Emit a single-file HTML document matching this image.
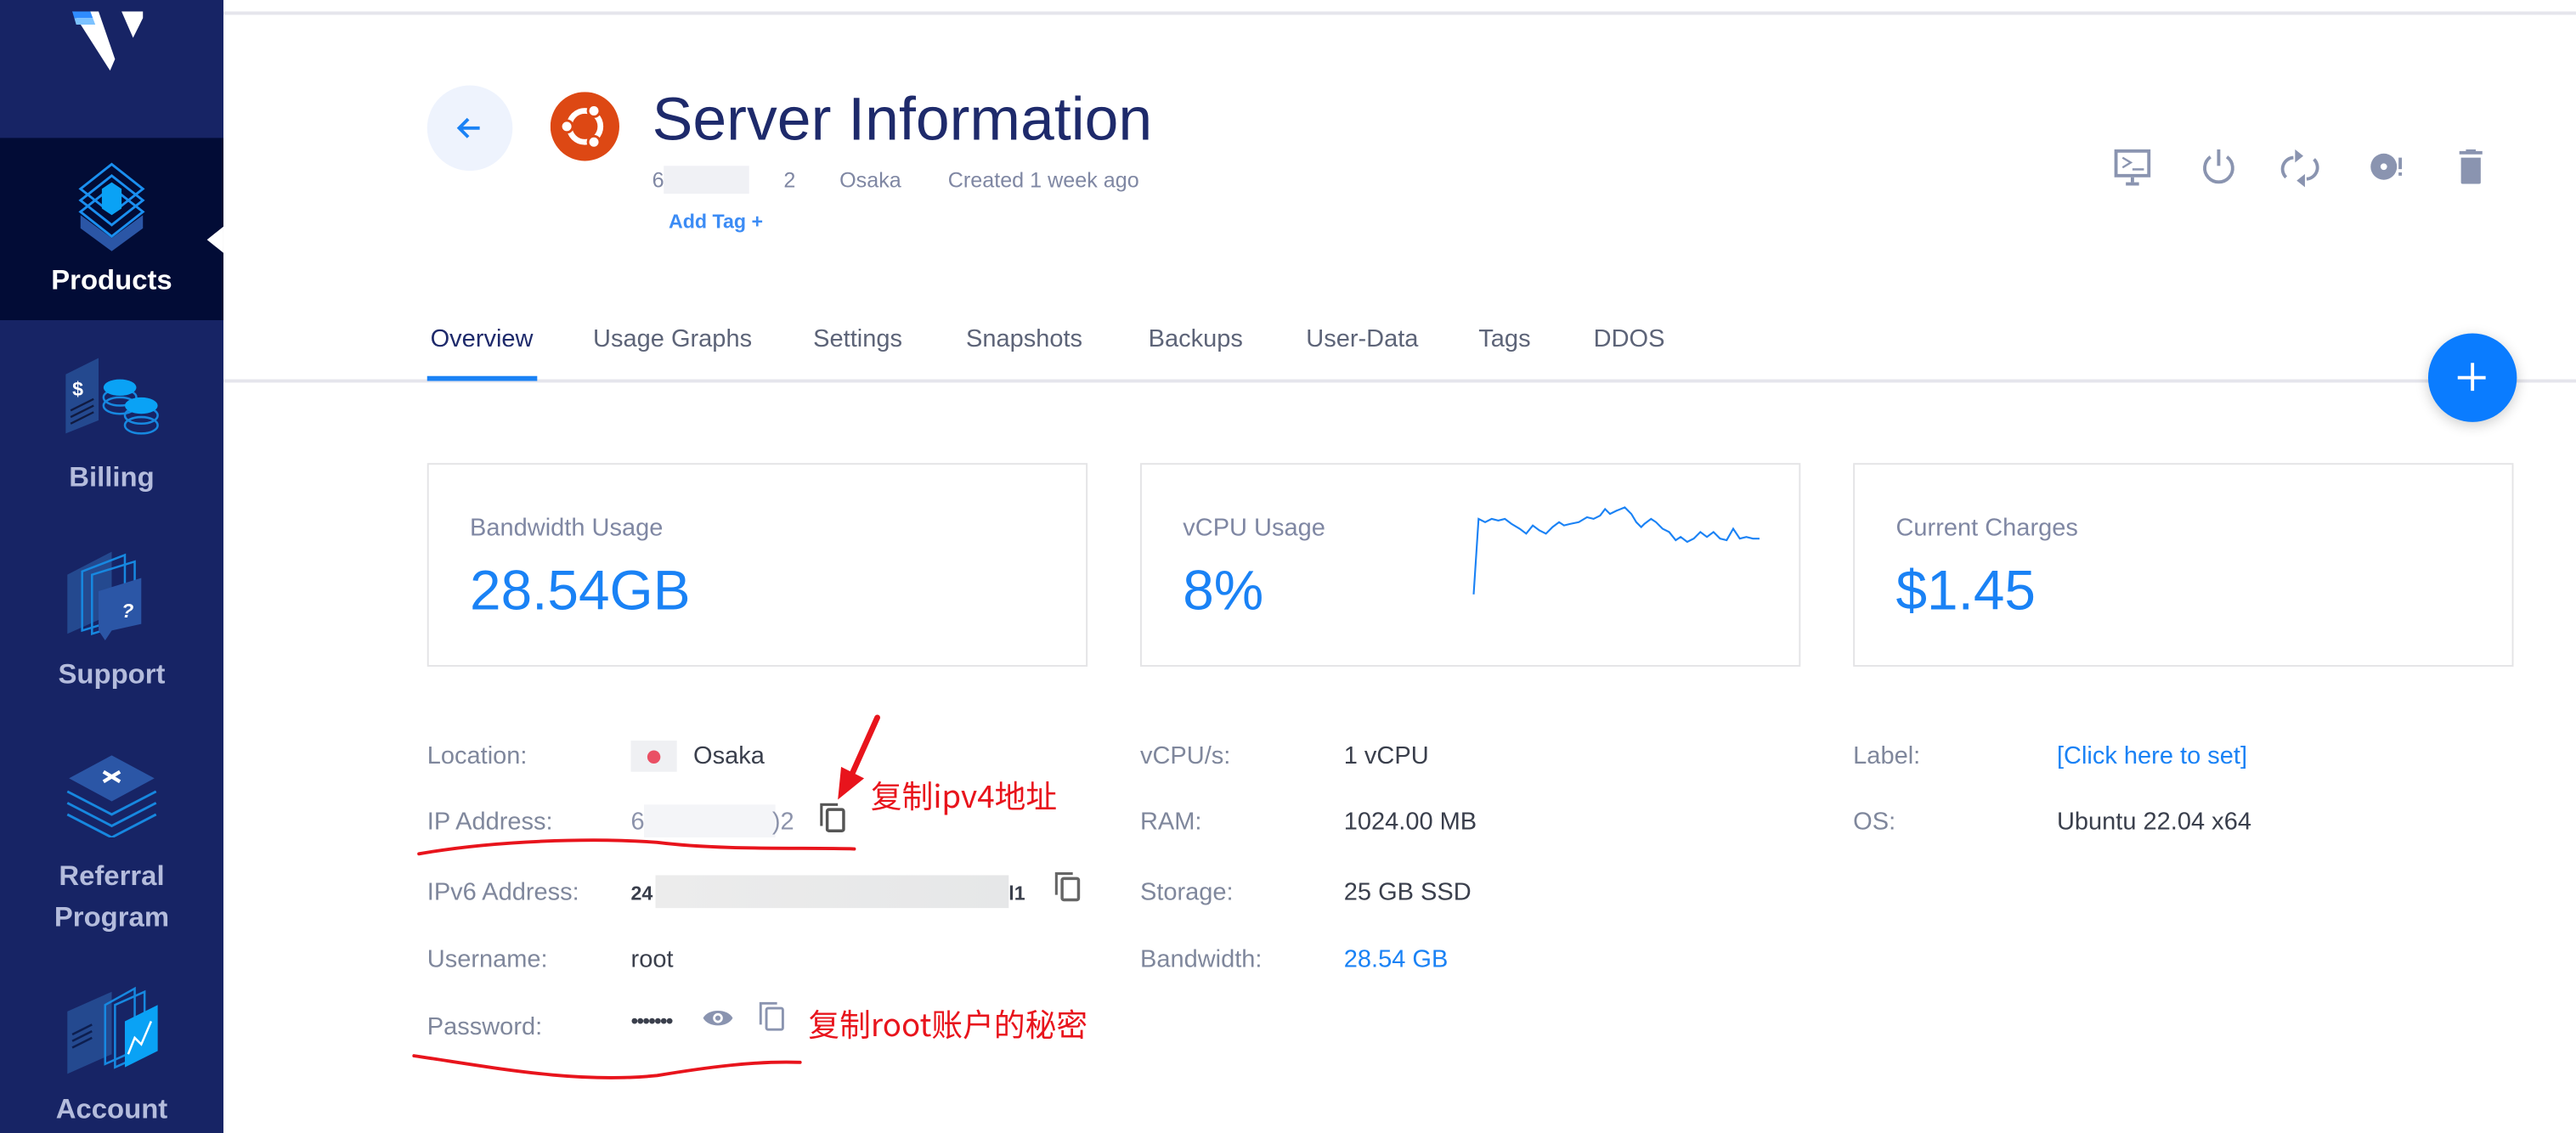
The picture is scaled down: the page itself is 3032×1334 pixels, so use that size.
<!DOCTYPE html>
<html><head><meta charset="utf-8"><style>
html,body{margin:0;padding:0;width:3032px;height:1334px;overflow:hidden;background:#fff}
#w{position:absolute;left:0;top:0;width:1568px;height:690px;transform:scale(1.93367,1.93333);transform-origin:0 0;font-family:"Liberation Sans","Noto Sans CJK SC",sans-serif}
.a{position:absolute;white-space:nowrap}
.sb{position:absolute;left:0;top:0;width:136px;height:690px;background:#172465}
.nl{position:absolute;left:0;width:136px;text-align:center;color:#b4bcdc;font-size:17px;font-weight:bold}
.lab{position:absolute;color:#7f879c;font-size:15px}
.val{position:absolute;color:#3a3f4c;font-size:15px}
.card{position:absolute;top:282px;height:122px;border:1.5px solid #e4e4e6;width:400px}
.ct{position:absolute;left:25px;top:30px;color:#7f87a3;font-size:15px}
.cv{position:absolute;left:25px;top:58px;color:#1a82f5;font-size:34px}
.ic{position:absolute}
.red{position:absolute;color:#e8141c;font-size:19px;font-family:"Noto Sans CJK SC","Liberation Sans",sans-serif}
</style></head><body><div id="w">
<div class="sb"></div>
<!-- logo -->
<svg class="ic" style="left:0;top:0" width="136" height="60" viewBox="0 0 136 60"><path d="M44 7 H60 L70 36 L67 43 Z" fill="#fff"/><path d="M44 7 H55 L56.5 11 H45.2Z" fill="#2f8cff"/><path d="M45.2 11 H56.5 L58 15 H46.4Z" fill="#7cc2ff"/><path d="M74 7 H87 V11 L81 23 Z" fill="#fff"/></svg>
<div style="position:absolute;left:0;top:84px;width:136px;height:111px;background:#020c36"></div>
<div style="position:absolute;left:126px;top:138px;width:0;height:0;border-top:8px solid transparent;border-bottom:8px solid transparent;border-right:10px solid #fff"></div>
<svg class="ic" style="left:38px;top:95px" width="60" height="60" viewBox="0 0 60 60"><path d="M30 50 L11 36 V44 L30 58 L49 44 V36Z" fill="#2b56a6"/><g fill="none" stroke="#1a8ff0" stroke-width="1.5"><path d="M30 5 L49 20 L30 35 L11 20Z"/><path d="M30 12 L49 27 L30 42 L11 27Z"/><path d="M30 19 L49 34 L30 49 L11 34Z"/></g><path d="M30 16 L36 20 V32 L30 36 L24 32 V20Z" fill="#0aa2f5"/></svg>
<div class="nl" style="top:161px;color:#fff">Products</div>
<svg class="ic" style="left:38px;top:214px" width="62" height="58" viewBox="0 0 62 58"><path d="M2 24 L22 14 V52 L2 60Z" fill="#24498f" transform="translate(0,-10)"/><text x="6" y="27" fill="#fff" font-size="12" font-weight="bold" font-family="Liberation Sans">$</text><g stroke="#101a40" stroke-width="1.2"><path d="M5 36 L19 29 M5 40 L19 33 M5 44 L19 37"/></g><g fill="none" stroke="#1788e0" stroke-width="1.3"><ellipse cx="35" cy="28" rx="10" ry="5"/><ellipse cx="35" cy="33" rx="10" ry="5"/><ellipse cx="48" cy="39" rx="10" ry="5"/><ellipse cx="48" cy="45" rx="10" ry="5"/></g><g fill="#0aa2f5"><ellipse cx="35" cy="22" rx="10" ry="5"/><ellipse cx="48" cy="33" rx="10" ry="5"/></g></svg>
<div class="nl" style="top:281px">Billing</div>
<svg class="ic" style="left:38px;top:334px" width="60" height="56" viewBox="0 0 60 56"><path d="M3 16 L30 2 V40 L3 52Z" fill="#24498f"/><g fill="none" stroke="#1788e0" stroke-width="1.3"><path d="M12 14 L38 4 V42 L12 50Z"/><path d="M18 16 L44 8 V44 L18 52Z"/></g><path d="M22 26 L48 18 V46 L30 50 L26 56 L22 50Z" fill="#2b56a6"/><text x="36" y="42" fill="#fff" font-size="12" font-style="italic" font-weight="bold" font-family="Liberation Sans">?</text></svg>
<div class="nl" style="top:401px">Support</div>
<svg class="ic" style="left:38px;top:458px" width="60" height="52" viewBox="0 0 60 52"><g fill="none" stroke="#1788e0" stroke-width="1.5"><path d="M3 24 L30 38 L57 24"/><path d="M3 31 L30 45 L57 31"/><path d="M3 38 L30 52 L57 38"/></g><path d="M30 2 L56 16 L30 30 L4 16Z" fill="#2b56a6"/><path d="M25 12 L35 18 M35 12 L25 18" stroke="#fff" stroke-width="2.2"/></svg>
<div class="nl" style="top:521px;line-height:25px">Referral<br>Program</div>
<svg class="ic" style="left:38px;top:598px" width="60" height="58" viewBox="0 0 60 58"><path d="M3 18 L30 6 V44 L3 56Z" fill="#24498f"/><g stroke="#0d1e4f" stroke-width="1.3"><path d="M6 32 L18 26 M6 36 L18 30 M6 40 L18 34"/></g><g fill="none" stroke="#1788e0" stroke-width="1.3"><path d="M26 14 L44 4 V42 L26 50Z"/><path d="M32 14 L50 6 V44 L32 52Z"/></g><path d="M38 24 L58 14 V42 L38 52Z" fill="#0aa2f5"/><path d="M40 44 L44 34 L48 38 L54 24" stroke="#fff" stroke-width="1.3" fill="none"/></svg>
<div class="nl" style="top:666px">Account</div>

<!-- main -->
<div style="position:absolute;left:136px;top:7px;width:1432px;height:1.5px;background:#e5e5ec"></div>
<div style="position:absolute;left:260px;top:52px;width:52px;height:52px;border-radius:50%;background:#eef3fd"></div>
<svg class="ic" style="left:276px;top:68px" width="20" height="20" viewBox="0 0 20 20"><path d="M16 10H4M9 4.5 L3.5 10 L9 15.5" fill="none" stroke="#1a82f5" stroke-width="2"/></svg>
<svg class="ic" style="left:335px;top:56px" width="42" height="42" viewBox="0 0 42 42"><circle cx="21" cy="21" r="21" fill="#dd4814"/><circle cx="21" cy="21" r="9.5" fill="none" stroke="#fff" stroke-width="3.5"/><circle cx="10" cy="21" r="3.6" fill="#fff" stroke="#dd4814" stroke-width="1.5"/><circle cx="26.5" cy="11.5" r="3.6" fill="#fff" stroke="#dd4814" stroke-width="1.5"/><circle cx="26.5" cy="30.5" r="3.6" fill="#fff" stroke="#dd4814" stroke-width="1.5"/></svg>
<div class="a" style="left:397px;top:52px;font-size:37px;color:#1e2a6b">Server Information</div>
<div class="a" style="left:397px;top:102px;font-size:13px;color:#7f87a3">6</div>
<div style="position:absolute;left:404px;top:101px;width:52px;height:17px;background:#f0f1f5"></div>
<div class="a" style="left:477px;top:102px;font-size:13px;color:#7f87a3">2</div>
<div class="a" style="left:511px;top:102px;font-size:13px;color:#7f87a3">Osaka</div>
<div class="a" style="left:577px;top:102px;font-size:13px;color:#7f87a3">Created 1 week ago</div>
<div class="a" style="left:407px;top:128px;font-size:12px;color:#3c8cf5;font-weight:bold">Add Tag +</div>

<!-- action icons -->
<svg class="ic" style="left:1285px;top:88px" width="240" height="28" viewBox="0 0 240 28" fill="#8a94b0">
<path d="M2 3h22v17H2zM4 5v13h18V5z" fill-rule="evenodd"/><path d="M7 8l5 3-5 3" fill="none" stroke="#8a94b0" stroke-width="1.2"/><rect x="13" y="14.5" width="7" height="1.3"/><rect x="12" y="20" width="2" height="3"/><rect x="9" y="23" width="8" height="2"/>
<path d="M60.5 7.5A8.5 8.5 0 1 0 70.5 7.5" fill="none" stroke="#8a94b0" stroke-width="2"/><rect x="64.5" y="3" width="2" height="10"/>
<path d="M111 8a7 7 0 0 0-4.5 12M119 21a7 7 0 0 0 4.5-12" fill="none" stroke="#8a94b0" stroke-width="2"/><path d="M112 3v8l5-4zM118 26v-8l-5 4z"/>
<circle cx="166" cy="13.5" r="8"/><circle cx="166" cy="13.5" r="2" fill="#fff"/><rect x="175" y="8" width="2" height="7"/><rect x="175" y="17" width="2" height="2"/>
<rect x="212" y="4" width="14" height="2"/><rect x="216" y="3" width="6" height="2"/><path d="M213 8h12v15a1 1 0 0 1-1 1h-10a1 1 0 0 1-1-1z"/>
</svg>

<!-- tabs -->
<div class="a" style="left:262px;top:198px;font-size:15px;color:#1e2a6b">Overview</div>
<div class="a" style="left:361px;top:198px;font-size:15px;color:#5d6478">Usage Graphs</div>
<div class="a" style="left:495px;top:198px;font-size:15px;color:#5d6478">Settings</div>
<div class="a" style="left:588px;top:198px;font-size:15px;color:#5d6478">Snapshots</div>
<div class="a" style="left:699px;top:198px;font-size:15px;color:#5d6478">Backups</div>
<div class="a" style="left:795px;top:198px;font-size:15px;color:#5d6478">User-Data</div>
<div class="a" style="left:900px;top:198px;font-size:15px;color:#5d6478">Tags</div>
<div class="a" style="left:970px;top:198px;font-size:15px;color:#5d6478">DDOS</div>
<div style="position:absolute;left:136px;top:231px;width:1432px;height:1.5px;background:#e5e5ec"></div>
<div style="position:absolute;left:260px;top:229px;width:67px;height:3px;background:#1a82f5"></div>
<div style="position:absolute;left:1478px;top:203px;width:54px;height:54px;border-radius:50%;background:#0a7cff;box-shadow:0 2px 8px rgba(0,0,0,.2)"></div>
<div style="position:absolute;left:1496px;top:229px;width:17px;height:2px;background:#fff"></div>
<div style="position:absolute;left:1503.5px;top:221px;width:2px;height:17px;background:#fff"></div>

<!-- cards -->
<div class="card" style="left:260px"><div class="ct">Bandwidth Usage</div><div class="cv">28.54GB</div></div>
<div class="card" style="left:694px"><div class="ct">vCPU Usage</div><div class="cv">8%</div></div>
<div class="card" style="left:1128px"><div class="ct">Current Charges</div><div class="cv">$1.45</div></div>
<svg class="ic" style="left:890px;top:300px" width="190" height="70" viewBox="890 300 190 70"><polyline fill="none" stroke="#1a82f5" stroke-width="1.1" points="897,362 900,316 904,318 908,316 912,317 916,316 920,319 925,322 929,325 933,320 937,323 941,325 945,321 949,318 952,320 956,319 961,318 966,315 970,316 974,314 977,310 980,313 984,311 989,309 993,313 996,318 999,321 1001,319 1005,316 1008,318 1012,322 1016,324 1020,329 1023,327 1027,330 1031,328 1035,324 1039,327 1043,324 1047,328 1051,329 1055,322 1059,328 1063,327 1067,328 1071,328"/></svg>

<!-- info -->
<div class="lab" style="left:260px;top:452px">Location:</div>
<div style="position:absolute;left:384px;top:451px;width:28px;height:19px;background:#eff0f3"></div>
<div style="position:absolute;left:394px;top:457px;width:8px;height:8px;border-radius:50%;background:#ea5064"></div>
<div class="val" style="left:422px;top:452px">Osaka</div>
<div class="lab" style="left:260px;top:492px">IP Address:</div>
<div class="a" style="left:384px;top:492px;font-size:15px;color:#8c93ab">6</div>
<div style="position:absolute;left:392px;top:490px;width:80px;height:20px;background:#f4f5f8"></div>
<div class="a" style="left:470px;top:492px;font-size:15px;color:#8c93ab">)2</div>
<div class="lab" style="left:260px;top:535px">IPv6 Address:</div>
<div class="a" style="left:384px;top:537px;font-size:12px;font-weight:bold;color:#3a3f4c">24</div>
<div style="position:absolute;left:399px;top:533px;width:215px;height:20px;background:linear-gradient(90deg,#ececec,#e6e7e8)"></div>
<div class="a" style="left:614px;top:537px;font-size:12px;font-weight:bold;color:#3a3f4c">l1</div>
<div class="lab" style="left:260px;top:576px">Username:</div>
<div class="val" style="left:384px;top:576px">root</div>
<div class="lab" style="left:260px;top:617px">Password:</div>
<div class="a" style="left:384px;top:614px;font-size:13px;color:#3a3f4c;letter-spacing:-1px">•••••••</div>
<svg class="ic" style="left:427px;top:612px" width="20" height="16" viewBox="0 0 20 16"><path d="M1 8C4 2 16 2 19 8 16 14 4 14 1 8z" fill="#8a94b0"/><circle cx="10" cy="8" r="3" fill="#fff"/><circle cx="10" cy="8" r="1.6" fill="#8a94b0"/></svg>
<!-- copy icons -->
<svg class="ic" style="left:497px;top:488px" width="20" height="22" viewBox="0 0 20 22"><path d="M3 15V2h10" fill="none" stroke="#555" stroke-width="1.6"/><rect x="6.5" y="5" width="10" height="13" rx="1" fill="none" stroke="#555" stroke-width="1.8"/></svg>
<svg class="ic" style="left:640px;top:530px" width="20" height="22" viewBox="0 0 20 22"><path d="M3 15V2h10" fill="none" stroke="#666" stroke-width="1.6"/><rect x="6.5" y="5" width="10" height="13" rx="1" fill="none" stroke="#666" stroke-width="1.8"/></svg>
<svg class="ic" style="left:460px;top:609px" width="20" height="22" viewBox="0 0 20 22"><path d="M3 15V2h10" fill="none" stroke="#8a94b0" stroke-width="1.5"/><rect x="6.5" y="5" width="10" height="13" rx="1" fill="none" stroke="#8a94b0" stroke-width="1.5"/></svg>

<div class="lab" style="left:694px;top:452px">vCPU/s:</div><div class="val" style="left:818px;top:452px">1 vCPU</div>
<div class="lab" style="left:694px;top:492px">RAM:</div><div class="val" style="left:818px;top:492px">1024.00 MB</div>
<div class="lab" style="left:694px;top:535px">Storage:</div><div class="val" style="left:818px;top:535px">25 GB SSD</div>
<div class="lab" style="left:694px;top:576px">Bandwidth:</div><div class="val" style="left:818px;top:576px;color:#1a82f5">28.54 GB</div>
<div class="lab" style="left:1128px;top:452px">Label:</div><div class="val" style="left:1252px;top:452px;color:#1a82f5">[Click here to set]</div>
<div class="lab" style="left:1128px;top:492px">OS:</div><div class="val" style="left:1252px;top:492px">Ubuntu 22.04 x64</div>

<!-- annotations -->
<svg class="ic" style="left:0;top:0" width="1568" height="690" viewBox="0 0 1568 690"><g fill="none" stroke="#e8141c" stroke-width="2" stroke-linecap="round"><path d="M255 520 C300 512 360 510 400 513 C440 518 490 516 520 517"/><path d="M252 643 C300 650 350 660 400 655 C430 650 460 646 487 647"/><path d="M534 437 L517 475" stroke-width="3.5"/></g><path d="M510 487 L512 467 L526 474Z" fill="#e8141c"/></svg>
<div class="red" style="left:530px;top:471px">复制ipv4地址</div>
<div class="red" style="left:492px;top:610px">复制root账户的秘密</div>
</div></body></html>
